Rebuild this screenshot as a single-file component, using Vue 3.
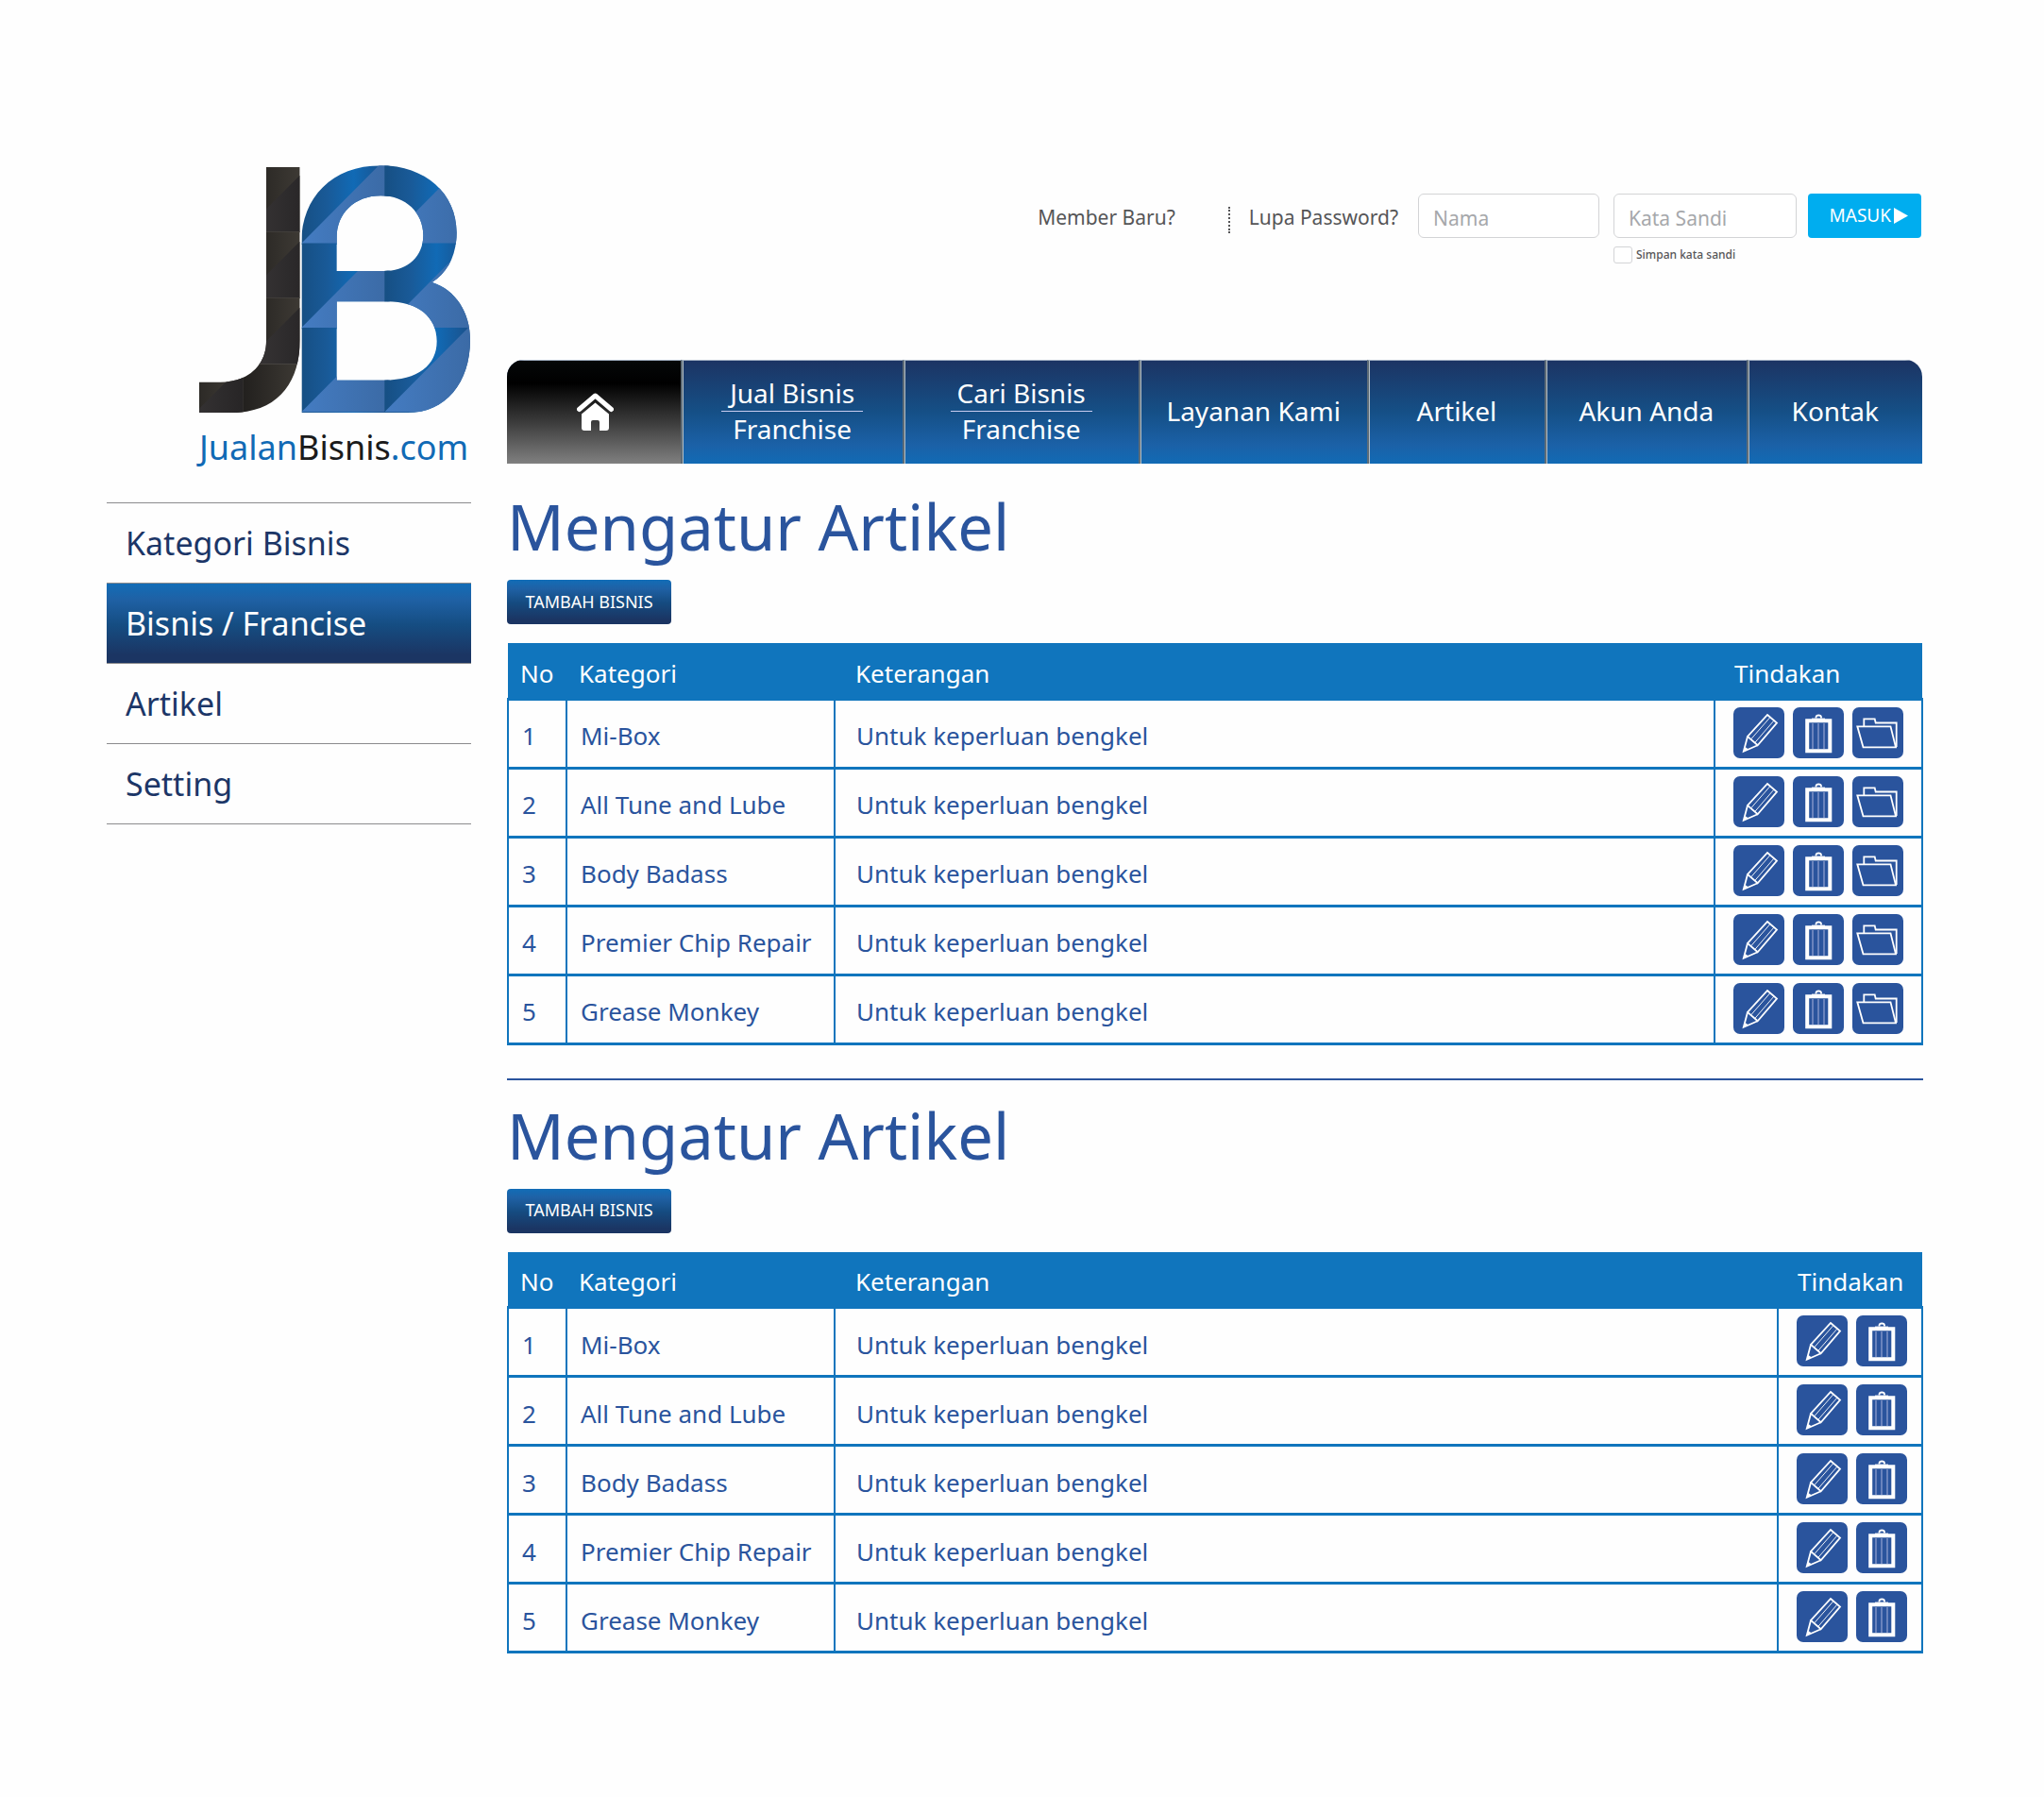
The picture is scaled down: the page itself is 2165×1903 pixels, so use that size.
<script setup>
const menu = ['Kategori Bisnis', 'Bisnis / Francise', 'Artikel', 'Setting']
const activeMenu = 'Bisnis / Francise'

const tabs = [
  { lines: ['Jual Bisnis', 'Franchise'], grow: 235 },
  { lines: ['Cari Bisnis', 'Franchise'], grow: 250 },
  { lines: ['Layanan Kami'], grow: 242 },
  { lines: ['Artikel'], grow: 188 },
  { lines: ['Akun Anda'], grow: 213 },
  { lines: ['Kontak'], grow: 186 },
]

const names = ['Mi-Box', 'All Tune and Lube', 'Body Badass', 'Premier Chip Repair', 'Grease Monkey']
const rows = names.map((name, i) => ({ no: i + 1, name, note: 'Untuk keperluan bengkel' }))

const sections = [
  { id: 'a', actions: ['edit', 'delete', 'open'] },
  { id: 'b', actions: ['edit', 'delete'] },
]
const actionLabels = { edit: 'Ubah', delete: 'Hapus', open: 'Buka' }
</script>

<template>
  <div class="page">
    <aside class="side">
      <a href="#" class="logo">
        <svg class="mark" viewBox="63 46 861 786" aria-hidden="true">
          <defs>
            <clipPath id="clip-j">
              <path d="M276 52H383V600C383 738 312 832 165 832H63V735H130C220 735 276 680 276 604Z" />
            </clipPath>
            <clipPath id="clip-b">
              <path
                clip-rule="evenodd"
                d="M388 832V290C388 150 485 47 640 47C782 47 881 136 881 260C881 332 852 387 803 418C878 442 924 514 924 600C924 738 845 832 725 832ZM500 382H650C722 382 775 338 775 268C775 198 720 143 640 143C556 143 500 200 500 275ZM500 479V729H650C758 729 818 682 818 605C818 528 758 479 660 479Z"
              />
            </clipPath>
            <linearGradient id="blue-dark">
              <stop offset="0" stop-color="#164f83" />
              <stop offset="0.3" stop-color="#195a98" />
              <stop offset="0.6" stop-color="#116ab5" />
              <stop offset="1" stop-color="#1b4f88" />
            </linearGradient>
            <linearGradient id="blue-light">
              <stop offset="0" stop-color="#447cc2" />
              <stop offset="1" stop-color="#3b6aa5" />
            </linearGradient>
            <linearGradient id="ink-light">
              <stop offset="0" stop-color="#22201e" />
              <stop offset="1" stop-color="#423e38" />
            </linearGradient>
            <linearGradient id="ink-dark">
              <stop offset="0" stop-color="#3a3738" />
              <stop offset="1" stop-color="#272526" />
            </linearGradient>
          </defs>
          <g clip-path="url(#clip-j)">
            <g v-for="y in [48, 258, 468]" :key="y">
              <rect x="203" :y="y" width="210" height="211" fill="url(#ink-light)" />
              <path :d="`M413 ${y}V${y + 210}H203Z`" fill="url(#ink-dark)" />
              <path :d="`M203 ${y + 210}H413`" stroke="#4b4844" stroke-width="3" />
            </g>
            <rect x="203" y="679" width="210" height="160" fill="url(#ink-light)" />
            <rect x="-7" y="679" width="211" height="160" fill="url(#ink-light)" />
            <path d="M203 679V889H-7Z" fill="url(#ink-dark)" />
          </g>
          <g clip-path="url(#clip-b)">
            <template v-for="y in [26, 294, 562]" :key="y">
              <g v-for="x in [388, 652]" :key="x">
                <rect :x="x" :y="y" width="276" height="272" fill="url(#blue-dark)" />
                <path :d="`M${x + 266} ${y}H${x + 280}V${y + 268}H${x}Z`" fill="url(#blue-light)" />
              </g>
            </template>
          </g>
        </svg>
        <span class="brand">Jualan<b>Bisnis</b>.com</span>
      </a>
      <ul class="menu">
        <li v-for="item in menu" :key="item">
          <a href="#" :class="{ active: item === activeMenu }">{{ item }}</a>
        </li>
      </ul>
    </aside>

    <main class="main">
      <form class="login" @submit.prevent>
        <a href="#" class="help">Member Baru?</a>
        <span class="dots"></span>
        <a href="#" class="help">Lupa Password?</a>
        <input class="field name" type="text" placeholder="Nama" aria-label="Nama" />
        <div class="secret">
          <input class="field" type="password" placeholder="Kata Sandi" aria-label="Kata Sandi" />
          <label class="keep"><input type="checkbox" />Simpan kata sandi</label>
        </div>
        <button class="enter" type="submit">
          MASUK
          <svg viewBox="0 0 15 17" aria-hidden="true"><path d="M0 0L15 8.500L0 17Z" fill="#fff" /></svg>
        </button>
      </form>

      <nav class="tabs">
        <a href="#" class="tab home" aria-label="Beranda">
          <svg viewBox="0 0 39 40" aria-hidden="true">
            <path d="M2.500 17.500L19.500 3L36.500 17.500" fill="none" stroke="#fff" stroke-width="5" stroke-linecap="round" stroke-linejoin="round" />
            <path d="M19.500 10.500L34 22.500V37Q34 40 31 40H24V31Q24 29 22 29H17Q15 29 15 31V40H8Q5 40 5 37V22.500Z" fill="#fff" />
          </svg>
        </a>
        <a v-for="tab in tabs" :key="tab.lines[0]" href="#" class="tab" :style="{ flexGrow: tab.grow }">
          <span v-for="line in tab.lines" :key="line" :class="{ split: tab.lines.length > 1 }">{{ line }}</span>
        </a>
      </nav>

      <section v-for="section in sections" :key="section.id" class="section">
        <h1>Mengatur Artikel</h1>
        <button class="add" type="button">TAMBAH BISNIS</button>
        <table>
          <colgroup>
            <col class="col-no" />
            <col class="col-name" />
            <col />
            <col :class="section.actions.length > 2 ? 'col-wide' : 'col-slim'" />
          </colgroup>
          <thead>
            <tr>
              <th>No</th>
              <th>Kategori</th>
              <th>Keterangan</th>
              <th>Tindakan</th>
            </tr>
          </thead>
          <tbody>
            <tr v-for="row in rows" :key="row.no">
              <td>{{ row.no }}</td>
              <td>{{ row.name }}</td>
              <td>{{ row.note }}</td>
              <td>
                <div class="actions">
                  <button v-for="action in section.actions" :key="action" type="button" :aria-label="actionLabels[action]">
                    <svg viewBox="0 0 54 54" fill="none" stroke="#fff" stroke-width="1.800" aria-hidden="true">
                      <template v-if="action === 'edit'">
                        <path d="M36 8L46 16.500L25.700 40.300L15 31Z" />
                        <path d="M15 31L10.800 46.800L25.700 40.300" />
                        <path d="M12.500 42L16 44.500L11 46.500Z" fill="#fff" stroke="none" />
                        <path d="M39 10.500L18.500 34M43 14L22.500 37.800" stroke-width="0.900" />
                      </template>
                      <template v-else-if="action === 'delete'">
                        <path d="M15.200 14.300H39.300V46.300H15.200Z" stroke-width="4" />
                        <path d="M21 17V44M27 17V44M33 17V44" stroke="#a9b2dc" stroke-width="1" />
                        <path d="M24.500 11.500V10.500Q24.500 8.500 27.200 8.500Q30 8.500 30 10.500V11.500" stroke-width="1.800" />
                        <path d="M20 12.500H34" />
                      </template>
                      <template v-else>
                        <path d="M12.300 20V12.300H23.700L24.700 16.500H46.700V42" />
                        <path d="M5.300 20.300H40.500L46 42.300H11.500Z" />
                      </template>
                    </svg>
                  </button>
                </div>
              </td>
            </tr>
          </tbody>
        </table>
      </section>
    </main>
  </div>
</template>

<style>
body {
  margin: 0;
  background: #fefefe;
}
</style>

<style scoped>
.page {
  display: flex;
  gap: 38px;
  padding: 175px 128px 150px 113px;
  font-family: 'Noto Sans', 'Open Sans', sans-serif;
  color: #2a549d;
}
.page * {
  box-sizing: border-box;
}
a {
  color: inherit;
  text-decoration: none;
}
button,
input {
  font-family: inherit;
  margin: 0;
}
button {
  border: 0;
  cursor: pointer;
}

.side {
  flex: none;
  width: 386px;
}
.logo {
  display: block;
  padding-left: 98px;
}
.mark {
  display: block;
  width: 287px;
  height: 262px;
}
.brand {
  display: block;
  margin-top: 12px;
  font-size: 36px;
  line-height: 50px;
  color: #116ab5;
  white-space: nowrap;
}
.brand b {
  font-weight: 400;
  color: #1b1b1b;
}
.menu {
  list-style: none;
  margin: 33px 0 0;
  padding: 0;
  border-top: 1px solid #8b8b8d;
}
.menu a {
  display: block;
  height: 85px;
  padding: 0 20px;
  border-bottom: 1px solid #8b8b8d;
  font-size: 34px;
  line-height: 84px;
  color: #1c3667;
}
.menu a.active {
  color: #fff;
  background: linear-gradient(#126db7, #1f61a5 20%, #154d82 52%, #1b3563 90%);
}

.main {
  flex: 1;
  min-width: 0;
  padding-top: 30px;
}
.login {
  display: flex;
  justify-content: flex-end;
  align-items: flex-start;
  height: 176px;
}
.help {
  font-size: 21px;
  line-height: 50px;
  color: #555557;
  white-space: nowrap;
}
.dots {
  height: 28px;
  margin: 14px 20px 0 56px;
  border-left: 2px dotted #555557;
}
.field {
  display: block;
  width: 194px;
  height: 47px;
  padding: 4px 15px 0;
  border: 1px solid #d3d4d6;
  border-radius: 6px;
  background: #fff;
  font-size: 21px;
  color: #555557;
}
.field::placeholder {
  color: #a6a8ab;
  opacity: 1;
}
.field.name {
  width: 192px;
  margin: 0 15px 0 21px;
}
.keep {
  display: flex;
  align-items: center;
  gap: 4px;
  margin-top: 9px;
  font-size: 12px;
  font-weight: 500;
  line-height: 18px;
  color: #555557;
}
.keep input {
  appearance: none;
  width: 20px;
  height: 18px;
  border: 1px solid #d3d4d6;
  border-radius: 3px;
  background: #fff;
}
.enter {
  display: flex;
  align-items: center;
  justify-content: flex-end;
  gap: 3px;
  width: 120px;
  height: 47px;
  margin: 0 2px 0 12px;
  padding: 0 14px 1px 0;
  border-radius: 4px;
  background: #00adef;
  color: #fff;
  font-size: 19px;
}
.enter svg {
  width: 15px;
  height: 17px;
}

.tabs {
  display: flex;
  height: 110px;
  margin-right: 1px;
  overflow: hidden;
  border-radius: 18px 18px 0 0;
  background: linear-gradient(#1c3463, #154f86 50%, #1b61a7 82%, #116bb5);
}
.tab {
  display: flex;
  flex: 1 1 0;
  flex-direction: column;
  align-items: center;
  justify-content: center;
  padding-bottom: 2px;
  border-top: 1px solid #a9b6c8;
  font-size: 28px;
  line-height: 37px;
  color: #fff;
}
.tab + .tab {
  border-left: 2px solid #5e6c77;
  box-shadow: inset 1px 0 #b4bfc6;
}
.tab.home {
  flex-grow: 181;
  padding-left: 4px;
  background: linear-gradient(#050708, #000 22%, #3c3c3c 60%, #808080);
}
.home svg {
  width: 39px;
  height: 40px;
}
.split {
  width: 150px;
  text-align: center;
}
.split + .split {
  border-top: 1px solid #c9cdf0;
}

.section {
  padding-top: 26px;
}
.section + .section {
  margin-top: 35px;
  padding-top: 18px;
  border-top: 2px solid #2a549d;
}
h1 {
  margin: 0;
  font-size: 67px;
  font-weight: 400;
  line-height: 80px;
}
.add {
  display: block;
  width: 174px;
  height: 47px;
  margin: 17px 0 20px;
  padding: 0 0 2px;
  border-radius: 4px;
  background: linear-gradient(#126db7, #1f61a5 20%, #154b80 52%, #1b3563 90%);
  color: #fff;
  font-size: 18px;
}
table {
  width: 100%;
  table-layout: fixed;
  border-collapse: collapse;
}
.col-no {
  width: 62px;
}
.col-name {
  width: 284px;
}
.col-wide {
  width: 220px;
}
.col-slim {
  width: 153px;
}
th {
  height: 59px;
  padding: 6px 0 0 13px;
  background: #1075bd;
  color: #fff;
  font-size: 26px;
  font-weight: 400;
  line-height: 36px;
  text-align: left;
}
td {
  height: 73px;
  padding: 5px 0 0 14px;
  border: 2px solid #1075bd;
  border-width: 3px 2px;
  font-size: 26px;
  line-height: 36px;
}
th:nth-child(3),
td:nth-child(3) {
  padding-left: 22px;
}
th:last-child {
  padding-left: 21px;
}
td:last-child {
  padding: 0 0 2px 19px;
}
.actions {
  display: flex;
  gap: 9px;
}
.actions button {
  width: 54px;
  height: 54px;
  padding: 0;
  border-radius: 7px;
  background: #2a549d;
}
.actions svg {
  display: block;
  width: 54px;
  height: 54px;
}
</style>
